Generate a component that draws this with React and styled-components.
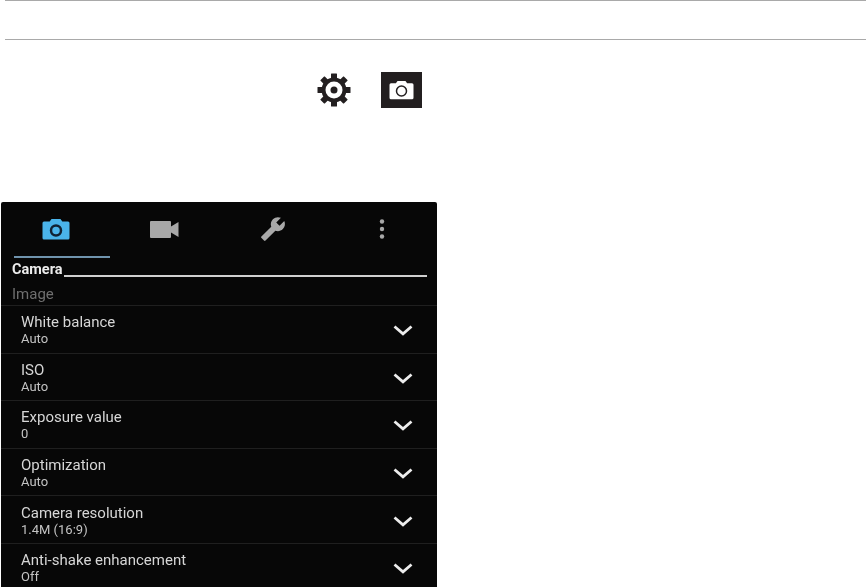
import React from "react";
import styled, { createGlobalStyle } from "styled-components";

const Global = createGlobalStyle`
  html, body { margin: 0; padding: 0; background: #fff; overflow: hidden; }
  body { font-family: Roboto, "Liberation Sans", sans-serif; }
`;
const Page = styled.div`
  width: 866px; height: 587px; display: flex; flex-direction: column; overflow: hidden; background: #fff;
`;
const Rule = styled.div`
  height: 1px; background: #a9a9a9; margin-left: 5px; flex: none;
  margin-bottom: ${p => p.$after}px;
`;
const InstructionRow = styled.div`
  display: flex; align-items: center; height: 36px; padding-left: 317px; gap: 30px; flex: none; margin-bottom: 94px; margin-top: 1px;
`;
const CameraChip = styled.div`
  width: 41px; height: 36px; background: #231f20; display: flex; align-items: center; justify-content: center;
`;
const Shot = styled.div`
  width: 436px; height: 385px; margin-left: 1px; background: #070707; flex: none; overflow: hidden;
  filter: blur(0.5px); border-radius: 2px 2px 0 0;
`;
const Tabs = styled.div`
  display: grid; grid-template-columns: repeat(4, 108.5px); height: 54px; padding-left: 1px; align-items: center;
`;
const Tab = styled.div`
  display: flex; justify-content: center; align-items: center;
`;
const TabLine = styled.div`
  width: 96px; height: 2px; margin-left: 13px; background: #6f93ad;
`;
const SectionHead = styled.div`
  display: flex; align-items: flex-end; gap: 2px; height: 16px; margin: 4px 10px 0 11px;
`;
const SectionTitle = styled.span`
  font-size: 14.5px; font-weight: 700; color: #ececec; line-height: 16px;
`;
const SectionLine = styled.div`
  flex: 1; height: 2px; background: #cfcfcf; margin-bottom: 1px;
`;
const Group = styled.div`
  font-size: 15px; color: #6f6f6f; height: 27px; line-height: 32px; padding-left: 11px;
`;
const Row = styled.div`
  height: 46.6px; border-top: 1px solid #1f1f1f; display: flex; align-items: center; justify-content: space-between;
  padding: 0 24px 0 20px; box-sizing: content-box;
`;
const RowText = styled.div`
  display: flex; flex-direction: column; padding-top: 3px;
`;
const RowTitle = styled.div`
  font-size: 15px; line-height: 17px; color: #d6d6d6;
`;
const RowValue = styled.div`
  font-size: 13px; line-height: 16px; color: #c4c4c4;
`;
const ChevronSlot = styled.div`
  display: flex; padding-top: 3px;
`;

const Gear = () => (
  <svg width="34" height="34" viewBox="0 0 34 34">
    <g fill="#231f20">
      {[0, 45, 90, 135, 180, 225, 270, 315].map(a => (
        <rect key={a} x="14" y="0.5" width="6" height="8" rx="0.5" transform={`rotate(${a} 17 17)`} />
      ))}
      <circle cx="17" cy="17" r="12.500" />
    </g>
    <circle cx="17" cy="17" r="8.500" fill="#fff" />
    <circle cx="17" cy="17" r="3.500" fill="#231f20" />
  </svg>
);
const CameraSmall = () => (
  <svg width="25" height="20" viewBox="0 0 25 20">
    <path fill="#fff" d="M8.500 1h8l1.600 2.200H23a1.500 1.500 0 0 1 1.500 1.500v13a1.500 1.500 0 0 1-1.500 1.500H2A1.500 1.500 0 0 1 .5 17.700v-13A1.500 1.500 0 0 1 2 3.200h4.900z" />
    <circle cx="12.500" cy="11" r="5" fill="none" stroke="#231f20" strokeWidth="1.500" />
  </svg>
);
const TabCamera = () => (
  <svg width="28" height="22" viewBox="0 0 28 22">
    <path fill="#4ab4ea" d="M9.500 1h9l1.800 2.500H26a1.500 1.500 0 0 1 1.500 1.500v15a1.500 1.500 0 0 1-1.500 1.500H2A1.500 1.500 0 0 1 .5 20V5A1.500 1.500 0 0 1 2 3.500h5.700z" />
    <circle cx="14" cy="12.500" r="5" fill="none" stroke="#123" strokeWidth="2.500" />
  </svg>
);
const TabVideo = () => (
  <svg width="29" height="17" viewBox="0 0 29 17">
    <path fill="#a8a8a8" d="M1 0h19a1 1 0 0 1 1 1v4.500L28.500 1v15L21 11.500V16a1 1 0 0 1-1 1H1a1 1 0 0 1-1-1V1a1 1 0 0 1 1-1z" />
  </svg>
);
const TabWrench = () => (
  <svg width="26" height="26" viewBox="0 0 24 24">
    <path fill="#a8a8a8" transform="matrix(-1 0 0 1 24 0)" d="M22.700 19l-9.100-9.100c.9-2.300.4-5-1.500-6.900-2-2-5-2.400-7.400-1.300L9 6 6 9 1.600 4.700C.4 7.100.9 10.100 2.900 12.100c1.900 1.900 4.600 2.400 6.900 1.500l9.100 9.100c.4.400 1 .4 1.400 0l2.300-2.300c.5-.4.500-1.100.1-1.400z" />
  </svg>
);
const TabDots = () => (
  <svg width="6" height="20" viewBox="0 0 6 20">
    <g fill="#a8a8a8"><circle cx="3" cy="2.500" r="2.200" /><circle cx="3" cy="10" r="2.200" /><circle cx="3" cy="17.500" r="2.200" /></g>
  </svg>
);
const Chevron = () => (
  <svg width="20" height="11" viewBox="0 0 20 11">
    <path d="M1.500 1.500L10 8.800L18.500 1.500" fill="none" stroke="#ececec" strokeWidth="2.800" />
  </svg>
);

const rows = [
  ["White balance", "Auto"],
  ["ISO", "Auto"],
  ["Exposure value", "0"],
  ["Optimization", "Auto"],
  ["Camera resolution", "1.4M (16:9)"],
  ["Anti-shake enhancement", "Off"],
];

export default function App() {
  return (
    <Page>
      <Global />
      <Rule $after={38} />
      <Rule $after={31} />
      <InstructionRow>
        <Gear />
        <CameraChip><CameraSmall /></CameraChip>
      </InstructionRow>
      <Shot>
        <Tabs>
          <Tab><TabCamera /></Tab>
          <Tab><TabVideo /></Tab>
          <Tab><TabWrench /></Tab>
          <Tab><TabDots /></Tab>
        </Tabs>
        <TabLine />
        <SectionHead>
          <SectionTitle>Camera</SectionTitle>
          <SectionLine />
        </SectionHead>
        <Group>Image</Group>
        {rows.map(([t, v]) => (
          <Row key={t}>
            <RowText>
              <RowTitle>{t}</RowTitle>
              <RowValue>{v}</RowValue>
            </RowText>
            <ChevronSlot><Chevron /></ChevronSlot>
          </Row>
        ))}
      </Shot>
    </Page>
  );
}
